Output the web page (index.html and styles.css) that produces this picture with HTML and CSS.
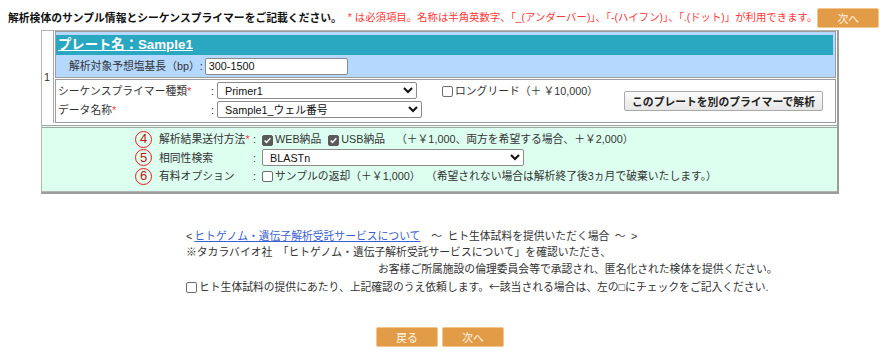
FILE: index.html
```html
<!DOCTYPE html>
<html lang="ja">
<head>
  <meta charset="UTF-8" />
  <title>サンプル情報入力</title>
  <link rel="stylesheet" href="styles.css">
</head>
<body>
  <div class="topbar">
    <span class="lead">解析検体のサンプル情報とシーケンスプライマーをご記載ください。</span>
    <span class="note">* は必須項目。名称は半角英数字、「_(アンダーバー)」、「-(ハイフン)」、「.(ドット)」が利用できます。</span>
    <button class="btn-orange topbar-next">次へ</button>
  </div>

  <div class="sheet">
    <div class="plate">
      <div class="plate-no">1</div>
      <div class="plate-body">
        <div class="plate-head">
          <div class="plate-title"><a href="#">プレート名：Sample1</a></div>
          <div class="plate-length">
            <span>解析対象予想塩基長（bp）:</span>
            <input class="text-input" type="text" value="300-1500">
          </div>
        </div>
        <div class="plate-main">
          <span class="field-label">シーケンスプライマー種類<em>*</em></span>
          <span class="colon">:</span>
          <select class="sel sel-primer"><option>Primer1</option></select>
          <span class="long-read"><span class="box"></span>ロングリード（＋&thinsp;￥10,000）</span>
          <button class="btn-alt">このプレートを別のプライマーで解析</button>
          <span class="field-label">データ名称<em>*</em></span>
          <span class="colon">:</span>
          <select class="sel sel-data"><option>Sample1_ウェル番号</option></select>
        </div>
      </div>
    </div>

    <div class="options">
      <div class="opt-row">
        <span class="num">4</span>
        <span class="opt-label">解析結果送付方法<em>*</em></span>
        <span class="opt-colon">:</span>
        <span class="opt-value">
          <span class="box on"><svg viewBox="0 0 11 11" width="9" height="9"><path d="M2 5.5l2.3 2.3L9 2.8" fill="none" stroke="#fff" stroke-width="1.8"/></svg></span>WEB納品
          <span class="box on gap-l"><svg viewBox="0 0 11 11" width="9" height="9"><path d="M2 5.5l2.3 2.3L9 2.8" fill="none" stroke="#fff" stroke-width="1.8"/></svg></span>USB納品
          <span class="price">（＋￥1,000、両方を希望する場合、＋￥2,000）</span>
        </span>
      </div>
      <div class="opt-row">
        <span class="num">5</span>
        <span class="opt-label">相同性検索</span>
        <span class="opt-colon">:</span>
        <select class="sel sel-blast"><option>BLASTn</option></select>
      </div>
      <div class="opt-row">
        <span class="num">6</span>
        <span class="opt-label">有料オプション</span>
        <span class="opt-colon">:</span>
        <span class="opt-value"><span class="box"></span>サンプルの返却（＋￥1,000）&ensp;（希望されない場合は解析終了後3ヵ月で破棄いたします。）</span>
      </div>
    </div>
  </div>

  <div class="info">
    <p><span class="lt">&lt;</span><a href="#">ヒトゲノム・遺伝子解析受託サービスについて</a>　～&ensp;ヒト生体試料を提供いただく場合&ensp;～&ensp;&gt;</p>
    <p>※タカラバイオ社&ensp;「ヒトゲノム・遺伝子解析受託サービスについて」を確認いただき、</p>
    <p class="indent">お客様ご所属施設の倫理委員会等で承認され、匿名化された検体を提供ください。</p>
    <p><span class="box"></span>ヒト生体試料の提供にあたり、上記確認のうえ依頼します。<span class="cjk">←</span>該当される場合は、左の□にチェックをご記入ください.</p>
  </div>

  <div class="footer">
    <button class="btn-orange">戻る</button>
    <button class="btn-orange">次へ</button>
  </div>
</body>
</html>
```

FILE: styles.css
```css
* {
  box-sizing: border-box;
}
body {
  margin: 8px;
  font-family: "Liberation Sans", "Noto Sans CJK JP", sans-serif;
  font-size: 10.8px;
  line-height: 16px;
  color: #222;
}
em {
  font-style: normal;
  color: #ff3b3b;
}
.cjk {
  font-family: "Noto Sans CJK JP", sans-serif;
}
.topbar {
  display: flex;
  align-items: center;
  height: 20px;
  white-space: nowrap;
}
.lead {
  font-weight: bold;
  color: #111;
}
.note {
  margin-left: 6px;
  font-size: 10.4px;
  color: #ff3838;
}
.topbar-next {
  margin-left: auto;
  margin-right: 7px;
  flex-shrink: 0;
}
.btn-orange {
  width: 62px;
  height: 20px;
  padding: 0;
  background: #e29b47;
  border: 1px solid #f2c68d;
  border-radius: 2px;
  color: #fff6e8;
  font-family: inherit;
  font-size: 10.8px;
  cursor: pointer;
}
.sheet {
  width: 798px;
  margin: 2px 0 0 33px;
  border: 1px solid #b4b4b4;
  border-right: 2px solid #9c9c9c;
  border-bottom: 2px solid #9c9c9c;
}
.plate {
  display: flex;
}
.plate-no {
  width: 12px;
  display: flex;
  align-items: center;
  padding-left: 2px;
  border-right: 1px solid #a8a8a8;
  color: #333;
}
.plate-body {
  flex: 1;
  padding: 0 1px;
}
.plate-head {
  background: #b4d8ff;
  border: 1px solid #9c9c9c;
  padding: 3px 2px 0 0;
}
.plate-title {
  background: #2ba8c1;
  height: 20px;
  line-height: 20px;
  padding-left: 2px;
}
.plate-title a {
  color: #fff;
  font-weight: bold;
  font-size: 10pt;
}
.plate-length {
  display: flex;
  align-items: center;
  height: 22px;
  padding-left: 13px;
  color: #333;
}
.text-input {
  width: 143px;
  height: 17px;
  margin-left: 2px;
  padding: 0 3px;
  border: 1px solid #8a8a8a;
  border-radius: 2px;
  font-family: inherit;
  font-size: 10.8px;
  color: #111;
}
.plate-main {
  display: grid;
  grid-template-columns: 150px 9px 225px 182px 199px;
  grid-template-rows: 17px 17px;
  row-gap: 2px;
  align-items: center;
  margin-top: 1px;
  padding: 2px 0 4px 2px;
  border: 1px solid #9c9c9c;
  background: #fff;
}
.field-label {
  color: #333;
}
.colon {
  padding-left: 3px;
}
.sel {
  height: 17px;
  padding: 0 3px;
  border: 1px solid #8a8a8a;
  border-radius: 2px;
  background: #fff;
  font-family: inherit;
  font-size: 10.8px;
  color: #111;
}
.sel-primer {
  width: 200px;
}
.sel-data {
  width: 205px;
}
.sel-blast {
  width: 262px;
}
.long-read {
  color: #333;
}
.btn-alt {
  grid-row: 1 / 3;
  grid-column: 5;
  align-self: start;
  margin-top: 9px;
  width: 199px;
  height: 20px;
  padding: 0;
  background: linear-gradient(#fbfbfb, #e6e6e6);
  border: 1px solid #a9a9a9;
  border-radius: 2px;
  font-family: inherit;
  font-size: 10.8px;
  font-weight: bold;
  color: #222;
}
.box {
  display: inline-flex;
  align-items: center;
  justify-content: center;
  width: 11px;
  height: 11px;
  margin-right: 2px;
  vertical-align: -2px;
  border: 1px solid #6e6e6e;
  border-radius: 2px;
  background: #fff;
}
.box.on {
  background: #5a5a5a;
  border-color: #5a5a5a;
}
.gap-l {
  margin-left: 4px;
}
.options {
  margin-top: 2px;
  padding: 2px 0 5px 93px;
  background: #ddfff0;
  border-top: 3px double #a4a4a4;
  border-bottom: 1px solid #b4b4b4;
}
.opt-row {
  display: flex;
  align-items: center;
  height: 18.5px;
  color: #333;
}
.num {
  display: inline-flex;
  align-items: center;
  justify-content: center;
  width: 17px;
  height: 17px;
  margin-right: 7px;
  border: 1.5px solid #f01818;
  border-radius: 50%;
  font-size: 13px;
  color: #c81010;
}
.opt-label {
  width: 91px;
}
.opt-colon {
  width: 12px;
  padding-left: 3px;
}
.price {
  margin-left: 8px;
}
.info {
  margin: 34px 0 0 178px;
  color: #333;
}
.info p {
  margin: 0;
  line-height: 16.7px;
}
.info .lt {
  margin-right: 2px;
}
.info a {
  color: #3b5fd1;
}
.info .indent {
  padding-left: 192px;
}
.footer {
  display: flex;
  justify-content: center;
  gap: 4px;
  width: 798px;
  margin: 32px 0 0 33px;
}
```
